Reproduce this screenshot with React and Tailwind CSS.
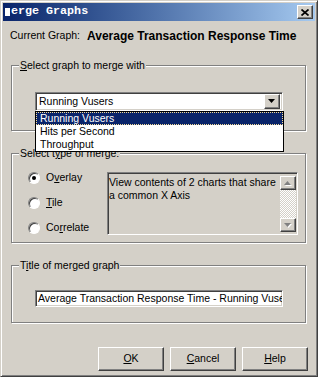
import React from "react";

// bevels used all over the dialog
const raised =
  "border border-t-white border-l-white border-r-[#404040] border-b-[#404040] shadow-[inset_-1px_-1px_0_#808080] bg-[#d4d0c8]";
const sunken =
  "border border-t-[#808080] border-l-[#808080] border-r-white border-b-white shadow-[inset_1px_1px_0_#404040,inset_-1px_-1px_0_#d4d0c8]";
const etched =
  "relative border border-[#808080] shadow-[inset_1px_1px_0_#fff,1px_1px_0_#fff]";

const U = ({ children }) => <span className="underline underline-offset-[1px]">{children}</span>;

const GroupBox = ({ label, className, children }) => (
  <div className={`${etched} ${className}`}>
    <div className="absolute -top-[7px] left-[7px] px-[1px] bg-[#d4d0c8] leading-[13px] whitespace-nowrap">
      {label}
    </div>
    {children}
  </div>
);

const Arrow = ({ down, color = "#000", shadow }) => (
  <svg width="8" height="5" viewBox="0 0 8 5">
    {shadow && (
      <polygon
        points={down ? "1,1 8,1 4.5,5" : "4.5,1 8,5 1,5"}
        fill="#fff"
      />
    )}
    <polygon points={down ? "0,0 7,0 3.5,4" : "3.5,0 7,4 0,4"} fill={color} />
  </svg>
);

const Radio = ({ checked, children }) => (
  <div className="h-[25px] flex items-center gap-[6px]">
    <div className="w-[12px] h-[12px] rounded-full bg-white border border-t-[#808080] border-l-[#808080] border-b-white border-r-white shadow-[inset_1px_1px_0_#404040] flex items-center justify-center">
      {checked && <div className="w-[4px] h-[4px] rounded-full bg-black" />}
    </div>
    <span>{children}</span>
  </div>
);

const Button = ({ children }) => (
  <div className={`${raised} w-[66px] h-[24px] flex items-center justify-center`}>{children}</div>
);

export default function App() {
  const items = ["Running Vusers", "Hits per Second", "Throughput"];

  return (
    <div className="w-[318px] h-[377px] overflow-hidden bg-[#d4d0c8] border border-t-[#d4d0c8] border-l-[#d4d0c8] border-r-[#404040] border-b-[#404040] shadow-[inset_1px_1px_0_#fff,inset_-1px_-1px_0_#808080] p-[2px] font-['Liberation_Sans',Arial,sans-serif] text-[10.5px] text-black">
      {/* title bar */}
      <div className="h-[18px] bg-gradient-to-r from-[#0a246a] to-[#a6caf0] flex items-center justify-between pl-[2px] pr-[2px]">
        <div className="flex items-center text-white font-bold font-['Liberation_Mono',monospace] text-[11.7px] leading-none">
          <span className="inline-block w-[5px] h-[8px] bg-white mr-[1px]" />
          erge Graphs
        </div>
        <div className={`${raised} w-[16px] h-[14px] flex items-center justify-center`}>
          <svg width="8" height="7" viewBox="0 0 8 7">
            <path d="M0.5 0.5 L7.5 6.5 M7.5 0.5 L0.5 6.5" stroke="#000" strokeWidth="1.7" />
          </svg>
        </div>
      </div>

      {/* current graph */}
      <div className="h-[30px] flex items-center pl-[7px]">
        <span>Current Graph:</span>
        <span className="ml-[7px] font-bold text-[12px]">Average Transaction Response Time</span>
      </div>

      <GroupBox
        className="ml-[8px] mt-[14px] w-[295px] h-[66px] z-10"
        label={<><U>S</U>elect graph to merge with</>}
      >
        <div className="relative ml-[23px] mt-[26px] w-[248px]">
          <div className={`${sunken} h-[19px] bg-white flex items-center pl-[3px] pr-[2px]`}>
            <span className="flex-1">Running Vusers</span>
            <div className={`${raised} w-[16px] h-[15px] flex items-center justify-center`}>
              <Arrow down />
            </div>
          </div>
          {/* open list */}
          <div className="absolute top-full left-0 w-[249px] border border-black bg-white">
            {items.map((it, i) => (
              <div
                key={it}
                className={`h-[13px] leading-[11px] pl-[3px] ${
                  i === 0
                    ? "bg-[#0a246a] text-white border border-dotted border-[#f5db95]"
                    : "border border-transparent"
                }`}
              >
                {it}
              </div>
            ))}
          </div>
        </div>
      </GroupBox>

      <GroupBox
        className="ml-[8px] mt-[22px] w-[295px] h-[90px]"
        label={<>Select t<U>y</U>pe of merge:</>}
      >
        <div className="flex items-start pt-[11px] pl-[16px]">
          <div className="w-[79px] flex flex-col">
            <Radio checked>
              O<U>v</U>erlay
            </Radio>
            <Radio>
              <U>T</U>ile
            </Radio>
            <Radio>
              Co<U>r</U>relate
            </Radio>
          </div>
          <div className={`${sunken} mt-[7px] w-[191px] h-[63px] flex pt-[3px] pb-[2px] pr-[1px]`}>
            <div className="flex-1 pl-[1px] leading-[13px]">
              View contents of 2 charts that share
              <br />a common X Axis
            </div>
            <div className="w-[16px] flex flex-col">
              <div className={`${raised} h-[14px] flex items-center justify-center`}>
                <Arrow color="#808080" shadow />
              </div>
              <div className="flex-1 bg-[repeating-conic-gradient(#d4d0c8_0_25%,#fff_0_50%)] bg-[length:2px_2px]" />
              <div className={`${raised} h-[14px] flex items-center justify-center`}>
                <Arrow down color="#808080" shadow />
              </div>
            </div>
          </div>
        </div>
      </GroupBox>

      <GroupBox
        className="ml-[8px] mt-[22px] w-[295px] h-[58px]"
        label={<>T<U>i</U>tle of merged graph</>}
      >
        <div className={`${sunken} ml-[23px] mt-[24px] w-[248px] h-[17px] bg-white flex items-center pl-[2px] overflow-hidden whitespace-nowrap`}>
          Average Transaction Response Time - Running Vusers
        </div>
      </GroupBox>

      {/* buttons */}
      <div className="mt-[24px] flex justify-end gap-[6px] pr-[7px]">
        <Button>
          <U>O</U>K
        </Button>
        <Button>
          <U>C</U>ancel
        </Button>
        <Button>
          <U>H</U>elp
        </Button>
      </div>
    </div>
  );
}
